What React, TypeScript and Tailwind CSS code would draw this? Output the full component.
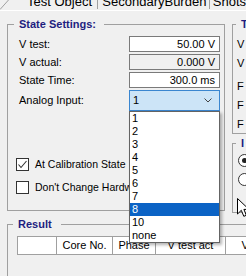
import React from "react";

const LINE = "border-[#a0a0a0]";

function Group({
  title,
  className,
  legendClass,
  children,
}: {
  title: string;
  className: string;
  legendClass: string;
  children?: React.ReactNode;
}) {
  return (
    <fieldset className={`border ${LINE} min-w-0 shrink-0 ${className}`}>
      <legend className={`text-[11px] leading-[14px] font-bold text-[#1e1e80] ${legendClass}`}>{title}</legend>
      {children}
    </fieldset>
  );
}

function ValueBox({ value, unit, readOnly }: { value: string; unit: string; readOnly?: boolean }) {
  return (
    <div
      className={`w-[91px] h-[16px] border border-[#7a7a7a] flex items-center justify-end pr-[4px] leading-[14px] ${
        readOnly ? "bg-[#f0f0f0]" : "bg-white"
      }`}
    >
      {value}&nbsp;{unit}
    </div>
  );
}

function Checkbox({ checked, label }: { checked?: boolean; label: string }) {
  return (
    <div className="flex items-center gap-[6px] h-[13px] whitespace-nowrap text-[10.5px]">
      <div className="w-[13px] h-[13px] border border-[#333] bg-white flex items-center justify-center shrink-0">
        {checked && (
          <svg width="11" height="11" viewBox="0 0 11 11">
            <polyline points="1.5,5.5 4,8.5 9.5,2" fill="none" stroke="#333" strokeWidth="1.1" />
          </svg>
        )}
      </div>
      <span>{label}</span>
    </div>
  );
}

function Radio({ checked }: { checked?: boolean }) {
  return (
    <div className="w-[13px] h-[13px] rounded-full border border-[#333] bg-white flex items-center justify-center">
      {checked && <div className="w-[5px] h-[5px] rounded-full bg-[#222]" />}
    </div>
  );
}

const OPTIONS = ["1", "2", "3", "4", "5", "6", "7", "8", "10", "none"];

export default function App() {
  return (
    <div className="relative w-[246px] h-[276px] overflow-hidden bg-[#f0f0f0] text-black text-[11px] font-['Liberation_Sans',Arial,sans-serif]">
      {/* Tab strip, cut off at the top */}
      <div className="relative h-[11px] overflow-hidden border-b border-white">
        <svg className="absolute left-0 top-0" width="10" height="10">
          <line x1="0" y1="9.5" x2="8.5" y2="0" stroke="#a0a0a0" strokeWidth="1" />
        </svg>
        <div className="flex mt-[-5px] text-[13px] leading-[13px] whitespace-nowrap">
          <span className="ml-[27px] w-[74px] h-[14px]">Test Object</span>
          <span className={`border-l ${LINE} pl-[4px] w-[117px] h-[14px]`}>SecondaryBurden</span>
          <span className={`border-l ${LINE} pl-[3px] h-[14px]`}>Shots</span>
        </div>
      </div>

      {/* Top row of groups */}
      <div className="flex pl-[7px] mt-[6px]">
        <Group title="State Settings:" className="w-[218px] h-[194px]" legendClass="ml-[6px] pl-[5px] pr-[8px]">
          <div className="pl-[11px] pt-[5px] flex flex-col gap-[2px]">
            <div className="flex items-center h-[16px]">
              <span className="w-[110px]">V test:</span>
              <ValueBox value="50.00" unit="V" />
            </div>
            <div className="flex items-center h-[16px]">
              <span className="w-[110px]">V actual:</span>
              <ValueBox value="0.000" unit="V" readOnly />
            </div>
            <div className="flex items-center h-[16px]">
              <span className="w-[110px]">State Time:</span>
              <ValueBox value="300.0" unit="ms" />
            </div>
            <div className="flex items-center h-[21px]">
              <span className="w-[110px]">Analog Input:</span>
              <div className="w-[91px] h-[21px] border border-[#3a86d0] bg-[#cce4f7] flex items-center justify-between pl-[3px] pr-[7px]">
                <span className="text-[11px]">1</span>
                <svg width="8" height="5" viewBox="0 0 8 5">
                  <polyline points="0.5,0.5 4,4 7.5,0.5" fill="none" stroke="#444" strokeWidth="1" />
                </svg>
              </div>
            </div>
          </div>
          <div className="pl-[8px] mt-[47px] flex flex-col gap-[10px]">
            <Checkbox checked label="At Calibration State" />
            <Checkbox label="Don't Change Hardware" />
          </div>
        </Group>

        <div className="ml-[7px] w-[40px] shrink-0 flex flex-col">
          <Group title="T" className="w-[40px] h-[117px]" legendClass="ml-[3px] pl-[5px] pr-[4px]">
            <div className="pl-[4px] pt-[4px] flex flex-col">
              <div className="h-[19px] flex items-center">V</div>
              <div className="h-[19px] flex items-center">V</div>
              <div className="h-[19px] flex items-center mt-[4px]">F</div>
              <div className="h-[19px] flex items-center">F</div>
              <div className="h-[18px] flex items-center">F</div>
            </div>
          </Group>
          <Group title="I" className="w-[40px] h-[77px] mt-[2px]" legendClass="ml-[3px] pl-[5px] pr-[4px]">
            <div className="pl-[5px] pt-[1px] flex flex-col">
              <div className="h-[19px] flex items-center">
                <Radio checked />
              </div>
              <div className="h-[19px] flex items-center">
                <Radio />
              </div>
            </div>
          </Group>
        </div>
      </div>

      {/* Result group */}
      <div className="pl-[7px] mt-[4px]">
        <Group title="Result" className="w-[300px] h-[80px]" legendClass="ml-[5px] pl-[5px] pr-[9px]">
          <div className="pl-[9px] pt-[5px]">
            <div className={`flex h-[19px] border-t border-b border-l ${LINE} bg-white whitespace-nowrap`}>
              <div className={`w-[39px] border-r ${LINE}`} />
              <div className={`w-[56px] border-r ${LINE} flex items-center justify-center`}>Core No.</div>
              <div className={`w-[43px] border-r ${LINE} flex items-center justify-center`}>Phase</div>
              <div className={`w-[70px] border-r ${LINE} flex items-center justify-center`}>V test act</div>
              <div className={`w-[60px] border-r ${LINE} flex items-center justify-center`}>V test</div>
            </div>
          </div>
        </Group>
      </div>

      {/* Open dropdown list */}
      <div className="absolute left-[129px] top-[111px] w-[91px] h-[132px] bg-white border border-[#646464] shadow-[2px_2px_3px_rgba(0,0,0,0.3)]">
        {OPTIONS.map((o) => (
          <div
            key={o}
            className={`h-[13px] leading-[13px] pl-[2px] ${o === "8" ? "bg-[#0b63c5] text-white" : ""}`}
          >
            {o}
          </div>
        ))}
      </div>

      {/* Mouse pointer */}
      <svg className="absolute left-[237px] top-[198px]" width="13" height="20" viewBox="0 0 13 20">
        <path d="M0.5 0.5 L0.5 16 L4.3 12.3 L6.8 18.3 L9.3 17.3 L6.9 11.4 L12 11.4 Z" fill="white" stroke="black" strokeWidth="1" />
      </svg>
    </div>
  );
}
